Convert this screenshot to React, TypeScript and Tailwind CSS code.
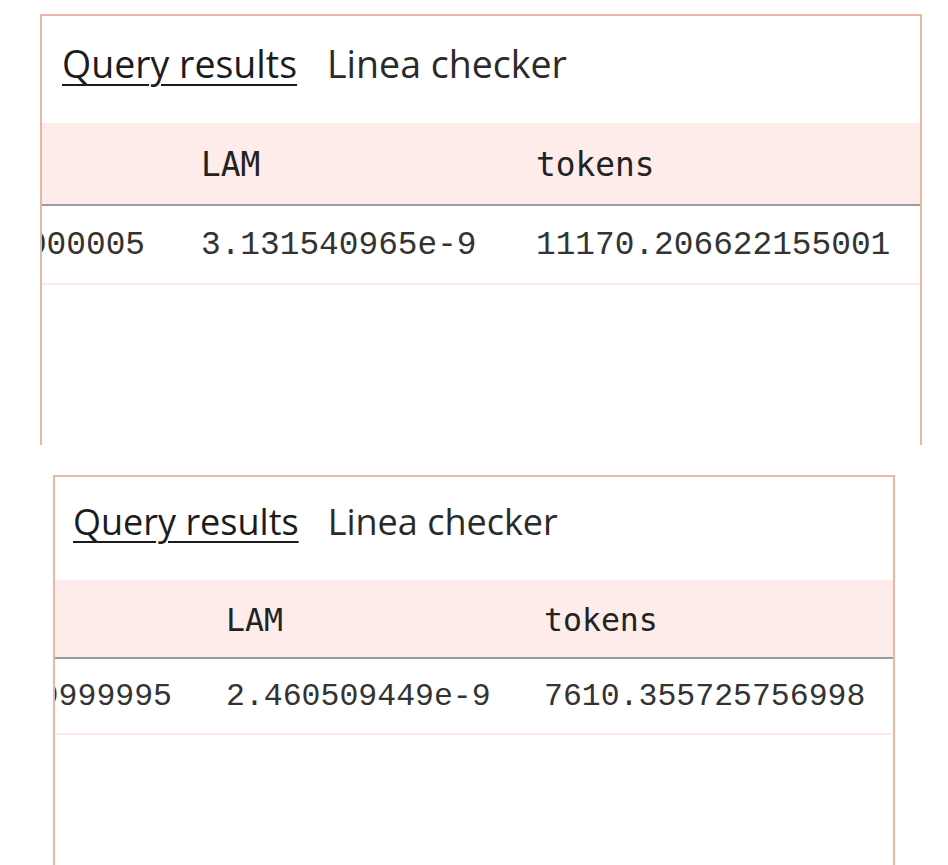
import React from "react";

const mono = "font-['Liberation_Mono','DejaVu_Sans_Mono',monospace]";
const monoHead = "font-['DejaVu_Sans_Mono','Liberation_Mono',monospace]";
const sans = "font-['Open_Sans','Noto_Sans',sans-serif]";

export default function App() {
  return (
    <div className="w-[948px] h-[865px] bg-white overflow-hidden">
      {/* Card 1 */}
      <div className="ml-[40px] mt-[14px] w-[882px] h-[431px] border-2 border-b-0 border-[#eab5a5] overflow-hidden">
        <div className={`h-[107px] flex items-start pt-[24px] pl-[20px] gap-[30px] ${sans} text-[37.5px] leading-[48px]`}>
          <span className="underline underline-offset-[6px] decoration-2 text-[#1c1c1c]">Query results</span>
          <span className="text-[#2a2a2a]">Linea checker</span>
        </div>
        <div className={`h-[83px] bg-[#fdecea] border-b-2 border-[#9a9a9a] flex items-center pt-[4px] ${monoHead} text-[32.8px] text-[#222]`}>
          <div className="w-[103px] shrink-0" />
          <div className="w-[278px] ml-[56px] shrink-0">LAM</div>
          <div className="ml-[57px]">tokens</div>
        </div>
        <div className={`h-[79px] border-b-2 border-[#fcebe7] flex items-center pt-[2px] ${mono} text-[32.8px] text-[#333]`}>
          <div className="w-[103px] shrink-0 overflow-hidden flex justify-end whitespace-nowrap">0.000000000000005</div>
          <div className="w-[278px] ml-[56px] shrink-0 whitespace-nowrap">3.131540965e-9</div>
          <div className="ml-[57px] whitespace-nowrap">11170.206622155001</div>
        </div>
      </div>

      {/* Card 2 */}
      <div className="ml-[53px] mt-[30px] w-[842px] h-[420px] border-2 border-b-0 border-[#eab5a5] overflow-hidden">
        <div className={`h-[103px] flex items-start pt-[22px] pl-[18px] gap-[29px] ${sans} text-[36px] leading-[46px]`}>
          <span className="underline underline-offset-[6px] decoration-2 text-[#1c1c1c]">Query results</span>
          <span className="text-[#2a2a2a]">Linea checker</span>
        </div>
        <div className={`h-[79px] bg-[#fdecea] border-b-2 border-[#9a9a9a] flex items-center pt-[4px] ${monoHead} text-[31.5px] text-[#222]`}>
          <div className="w-[117px] shrink-0" />
          <div className="w-[264px] ml-[54px] shrink-0">LAM</div>
          <div className="ml-[54px]">tokens</div>
        </div>
        <div className={`h-[76px] border-b-2 border-[#fcebe7] flex items-center pt-[2px] ${mono} text-[31.5px] text-[#333]`}>
          <div className="w-[117px] shrink-0 overflow-hidden flex justify-end whitespace-nowrap">0.9999999999995</div>
          <div className="w-[264px] ml-[54px] shrink-0 whitespace-nowrap">2.460509449e-9</div>
          <div className="ml-[54px] whitespace-nowrap">7610.355725756998</div>
        </div>
      </div>
    </div>
  );
}
